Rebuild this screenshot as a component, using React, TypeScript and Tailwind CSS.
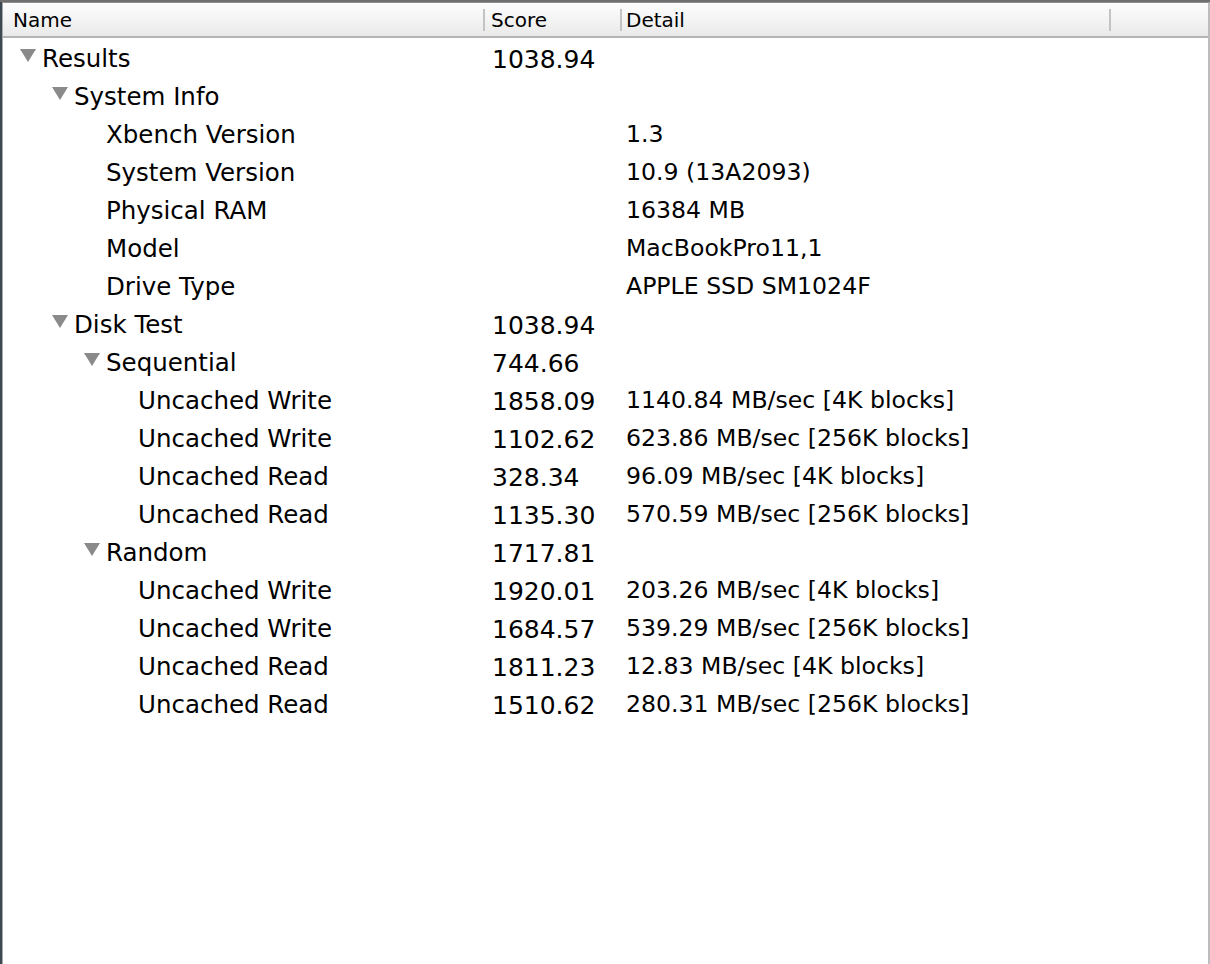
import React from "react";

type Row = {
  label: string;
  level: number;
  open?: boolean;
  score?: string;
  detail?: string;
};

const rows: Row[] = [
  { label: "Results", level: 0, open: true, score: "1038.94" },
  { label: "System Info", level: 1, open: true },
  { label: "Xbench Version", level: 2, detail: "1.3" },
  { label: "System Version", level: 2, detail: "10.9 (13A2093)" },
  { label: "Physical RAM", level: 2, detail: "16384 MB" },
  { label: "Model", level: 2, detail: "MacBookPro11,1" },
  { label: "Drive Type", level: 2, detail: "APPLE SSD SM1024F" },
  { label: "Disk Test", level: 1, open: true, score: "1038.94" },
  { label: "Sequential", level: 2, open: true, score: "744.66" },
  { label: "Uncached Write", level: 3, score: "1858.09", detail: "1140.84 MB/sec [4K blocks]" },
  { label: "Uncached Write", level: 3, score: "1102.62", detail: "623.86 MB/sec [256K blocks]" },
  { label: "Uncached Read", level: 3, score: "328.34", detail: "96.09 MB/sec [4K blocks]" },
  { label: "Uncached Read", level: 3, score: "1135.30", detail: "570.59 MB/sec [256K blocks]" },
  { label: "Random", level: 2, open: true, score: "1717.81" },
  { label: "Uncached Write", level: 3, score: "1920.01", detail: "203.26 MB/sec [4K blocks]" },
  { label: "Uncached Write", level: 3, score: "1684.57", detail: "539.29 MB/sec [256K blocks]" },
  { label: "Uncached Read", level: 3, score: "1811.23", detail: "12.83 MB/sec [4K blocks]" },
  { label: "Uncached Read", level: 3, score: "1510.62", detail: "280.31 MB/sec [256K blocks]" },
];

// leaf rows: text position; open rows: triangle position
const leafIndent = ["pl-[39px]", "pl-[71px]", "pl-[103px]", "pl-[135px]"];
const openIndent = ["pl-[17px]", "pl-[49px]", "pl-[81px]", "pl-[113px]"];

const Disclosure = () => (
  <svg width="16" height="14" viewBox="0 0 16 14" className="shrink-0 mr-[6px] -mt-[6px]">
    <polygon points="0,0 16,0 8,13" fill="#8a8a8a" />
  </svg>
);

const App = () => {
  return (
    <div
      className="w-[1210px] h-[964px] bg-[#5b646c] flex flex-col overflow-hidden"
      style={{ fontFamily: '"DejaVu Sans", "Lucida Grande", sans-serif' }}
    >
      <div className="h-[2px] bg-[#6f6f6f] shrink-0" />
      <div className="flex flex-1 min-h-0">
        <div className="w-[2px] bg-[#3c4852] shrink-0" />
        <div className="flex-1 flex flex-col bg-white border-l border-[#a9a9a9] border-r-[2px] border-r-[#bdbdbd] border-t border-t-[#8e8e8e]">
          <div className="h-[35px] shrink-0 flex items-center border-b-2 border-[#b4b4b4] bg-gradient-to-b from-[#fdfdfd] via-[#f4f4f4] to-[#e9e9e9] text-[20px] text-black">
            <div className="w-[480px] pl-[10px]">Name</div>
            <div className="w-[2px] h-[22px] bg-[#c4c4c4]" />
            <div className="w-[135px] pl-[6px]">Score</div>
            <div className="w-[2px] h-[22px] bg-[#c4c4c4]" />
            <div className="w-[487px] pl-[4px]">Detail</div>
            <div className="w-[2px] h-[22px] bg-[#c4c4c4]" />
          </div>
          <div className="pt-[2px] text-[24.5px] text-black leading-none">
            {rows.map((r, i) => (
              <div key={i} className="h-[38px] flex items-center">
                <div
                  className={`w-[489px] flex items-center ${
                    r.open ? openIndent[r.level] : leafIndent[r.level]
                  }`}
                >
                  {r.open && <Disclosure />}
                  <span>{r.label}</span>
                </div>
                <div className="w-[134px] text-[25px]">{r.score ?? ""}</div>
                <div className="text-[23.6px]">{r.detail ?? ""}</div>
              </div>
            ))}
          </div>
        </div>
      </div>
    </div>
  );
};

export default App;
